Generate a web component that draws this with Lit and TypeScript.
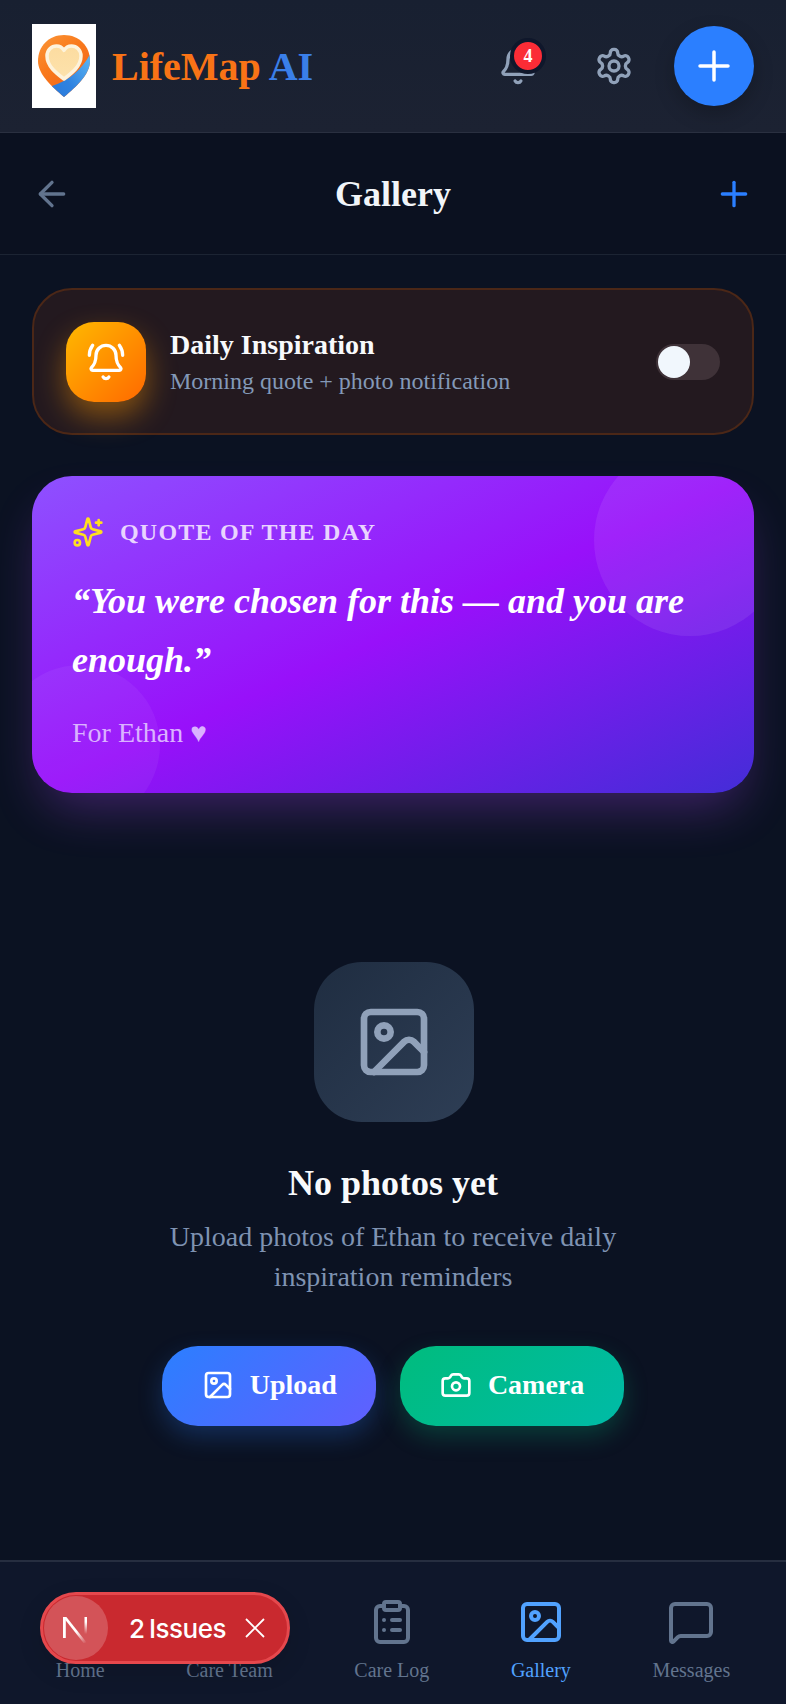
import { LitElement, html, css, svg } from "lit";
import { customElement } from "lit/decorators.js";

const icon = (size: number, body: unknown, cls = "", sw = 2) => html`<svg class=${cls} width=${size} height=${size} viewBox="0 0 24 24" fill="none" stroke="currentColor" stroke-width=${sw} stroke-linecap="round" stroke-linejoin="round">${body}</svg>`;

const bell = svg`<path d="M10.268 21a2 2 0 0 0 3.464 0"/><path d="M3.262 15.326A1 1 0 0 0 4 17h16a1 1 0 0 0 .74-1.673C19.41 13.956 18 12.499 18 8A6 6 0 0 0 6 8c0 4.499-1.411 5.956-2.738 7.326"/>`;
const bellRing = svg`<path d="M10.268 21a2 2 0 0 0 3.464 0"/><path d="M22 8c0-2.3-.8-4.3-2-6"/><path d="M3.262 15.326A1 1 0 0 0 4 17h16a1 1 0 0 0 .74-1.673C19.41 13.956 18 12.499 18 8A6 6 0 0 0 6 8c0 4.499-1.411 5.956-2.738 7.326"/><path d="M4 2C2.8 3.7 2 5.7 2 8"/>`;
const gear = svg`<path d="M12.22 2h-.44a2 2 0 0 0-2 2v.18a2 2 0 0 1-1 1.73l-.43.25a2 2 0 0 1-2 0l-.15-.08a2 2 0 0 0-2.73.73l-.22.38a2 2 0 0 0 .73 2.73l.15.1a2 2 0 0 1 1 1.72v.51a2 2 0 0 1-1 1.74l-.15.09a2 2 0 0 0-.73 2.73l.22.38a2 2 0 0 0 2.73.73l.15-.08a2 2 0 0 1 2 0l.43.25a2 2 0 0 1 1 1.73V20a2 2 0 0 0 2 2h.44a2 2 0 0 0 2-2v-.18a2 2 0 0 1 1-1.73l.43-.25a2 2 0 0 1 2 0l.15.08a2 2 0 0 0 2.73-.73l.22-.39a2 2 0 0 0-.73-2.73l-.15-.08a2 2 0 0 1-1-1.74v-.5a2 2 0 0 1 1-1.74l.15-.09a2 2 0 0 0 .73-2.73l-.22-.38a2 2 0 0 0-2.73-.73l-.15.08a2 2 0 0 1-2 0l-.43-.25a2 2 0 0 1-1-1.73V4a2 2 0 0 0-2-2z"/><circle cx="12" cy="12" r="3"/>`;
const plus = svg`<path d="M5 12h14"/><path d="M12 5v14"/>`;
const arrowLeft = svg`<path d="m12 19-7-7 7-7"/><path d="M19 12H5"/>`;
const sparkles = svg`<path d="M9.937 15.5A2 2 0 0 0 8.5 14.063l-6.135-1.582a.5.5 0 0 1 0-.962L8.5 9.936A2 2 0 0 0 9.937 8.5l1.582-6.135a.5.5 0 0 1 .963 0L14.063 8.5A2 2 0 0 0 15.5 9.937l6.135 1.581a.5.5 0 0 1 0 .964L15.5 14.063a2 2 0 0 0-1.437 1.437l-1.582 6.135a.5.5 0 0 1-.963 0z"/><path d="M20 3v4"/><path d="M22 5h-4"/><circle cx="4" cy="20" r="2"/>`;
const image = svg`<rect x="3" y="3" width="18" height="18" rx="2" ry="2"/><circle cx="9" cy="9" r="2"/><path d="m21 15-3.086-3.086a2 2 0 0 0-2.828 0L6 21"/>`;
const camera = svg`<path d="M13.997 4a2 2 0 0 1 1.76 1.05l.486.9A2 2 0 0 0 18.003 7H20a2 2 0 0 1 2 2v9a2 2 0 0 1-2 2H4a2 2 0 0 1-2-2V9a2 2 0 0 1 2-2h1.997a2 2 0 0 0 1.759-1.048l.489-.904A2 2 0 0 1 10.004 4z"/><circle cx="12" cy="13" r="3"/>`;
const home = svg`<path d="M15 21v-8a1 1 0 0 0-1-1h-4a1 1 0 0 0-1 1v8"/><path d="M3 10a2 2 0 0 1 .709-1.528l7-5.999a2 2 0 0 1 2.582 0l7 5.999A2 2 0 0 1 21 10v9a2 2 0 0 1-2 2H5a2 2 0 0 1-2-2z"/>`;
const users = svg`<path d="M16 21v-2a4 4 0 0 0-4-4H6a4 4 0 0 0-4 4v2"/><circle cx="9" cy="7" r="4"/><path d="M22 21v-2a4 4 0 0 0-3-3.87"/><path d="M16 3.13a4 4 0 0 1 0 7.75"/>`;
const clipboard = svg`<rect x="8" y="2" width="8" height="4" rx="1" ry="1"/><path d="M16 4h2a2 2 0 0 1 2 2v14a2 2 0 0 1-2 2H6a2 2 0 0 1-2-2V6a2 2 0 0 1 2-2h2"/><path d="M12 11h4"/><path d="M12 16h4"/><path d="M8 11h.01"/><path d="M8 16h.01"/>`;
const message = svg`<path d="M22 17a2 2 0 0 1-2 2H6.828a2 2 0 0 0-1.414.586l-2.202 2.202A.71.71 0 0 1 2 21.286V5a2 2 0 0 1 2-2h16a2 2 0 0 1 2 2z"/>`;

const logo = html`<svg class="logo" width="64" height="84" viewBox="0 0 64 84">
  <defs>
    <linearGradient id="pinO" x1="0.2" y1="0" x2="0.7" y2="0.8"><stop offset="0" stop-color="#fb9a3c"/><stop offset="0.5" stop-color="#f97a1c"/><stop offset="1" stop-color="#f0641a"/></linearGradient>
    <linearGradient id="pinB" x1="1" y1="0" x2="0" y2="1"><stop offset="0" stop-color="#62bdf6"/><stop offset="0.6" stop-color="#2f82e0"/><stop offset="1" stop-color="#2a78d8"/></linearGradient>
    <linearGradient id="heartF" x1="0.5" y1="0" x2="0.5" y2="1"><stop offset="0" stop-color="#fcdca0"/><stop offset="1" stop-color="#fde2ac"/></linearGradient>
    <clipPath id="pinClip"><path d="M32 11C17 11 6 22 6 37c0 13 13 25 26 36 13-11 26-23 26-36C58 22 47 11 32 11z"/></clipPath>
  </defs>
  <g clip-path="url(#pinClip)">
    <rect width="64" height="84" fill="url(#pinO)"/>
    <path d="M60 26 L60 80 L24 80 L20 62 C38 56 52 44 60 26z" fill="url(#pinB)"/>
  </g>
  <path d="M32 55C24 49 15 42 15 32c0-6 4.500-10 9.500-10 3 0 5.800 1.500 7.500 4.300C33.700 23.500 36.500 22 39.500 22c5 0 9.500 4 9.500 10 0 10-9 17-17 23z" fill="url(#heartF)" stroke="#fdf3dc" stroke-width="3.500" stroke-linejoin="round"/>
</svg>`;

@customElement("app-root")
export class AppRoot extends LitElement {
  static styles = css`
    :host { display: block; width: 786px; height: 1704px; font-family: "Liberation Serif", "Times New Roman", serif; color: #f8fafc; }
    * { box-sizing: border-box; }
    .app { position: relative; height: 1704px; display: flex; flex-direction: column; overflow: hidden; background: #0b1222; }
    svg { display: block; flex: none; }

    .top { height: 133px; flex: none; display: flex; align-items: center; padding: 0 32px; background: linear-gradient(180deg, #182031, #1c2232); border-bottom: 1px solid #2a3040; }
    .logo { background: #fff; }
    .brand { margin-left: 16px; font-size: 40px; font-weight: 700; color: #f97316; }
    .brand span { color: #3a7fe8; }
    .top-actions { margin-left: auto; display: flex; align-items: center; }
    .bell-wrap { position: relative; width: 40px; height: 40px; color: #90a1b9; margin-right: 56px; }
    .badge { position: absolute; top: -8px; left: 12px; width: 36px; height: 36px; border-radius: 50%; border: 4px solid #0f172b; display: flex; align-items: center; justify-content: center; font-size: 18px; font-weight: 700; color: #fff; background: #fb2c36; }
    .gear { color: #90a1b9; margin-right: 40px; }
    .add { width: 80px; height: 80px; border-radius: 50%; background: #2b7fff; color: #fff; display: flex; align-items: center; justify-content: center; box-shadow: 0 8px 20px rgba(0,0,0,.22); }

    .bar { height: 122px; flex: none; display: flex; align-items: center; justify-content: space-between; padding: 0 32px; border-bottom: 1px solid #1c2433; background: #0b1120; }
    .bar h1 { margin: 0; font-size: 36px; font-weight: 700; color: #f1f5f9; }
    .back { color: #62748e; }
    .more { color: #2b7fff; }

    .main { flex: 1; padding: 33px 32px 0; display: flex; flex-direction: column; min-height: 0; background: #0b1222; }
    .daily { height: 147px; flex: none; border-radius: 40px; background: #23191f; border: 2px solid #4b2717; display: flex; align-items: center; padding: 0 32px; }
    .daily-icon { width: 80px; height: 80px; border-radius: 28px; background: linear-gradient(135deg, #ffb900, #ff6900); display: flex; align-items: center; justify-content: center; color: #fff; box-shadow: 0 14px 30px rgba(254,154,0,.45); flex: none; }
    .daily-text { margin-left: 24px; flex: 1; padding-top: 2px; }
    .daily-title { font-size: 28px; font-weight: 700; color: #f8fafc; line-height: 36px; }
    .daily-sub { font-size: 24px; color: #8399b8; line-height: 36px; }
    .toggle { width: 64px; height: 36px; border-radius: 18px; background: #3f3238; position: relative; flex: none; }
    .thumb { position: absolute; left: 2px; top: 2px; width: 32px; height: 32px; border-radius: 50%; background: #f1f7fd; }

    .quote { position: relative; overflow: hidden; margin-top: 41px; height: 317px; flex: none; border-radius: 40px; padding: 40px; background: linear-gradient(to bottom right, #8e51ff 0%, #9810fa 50%, #432dd7 100%); box-shadow: 0 25px 50px -12px rgba(173, 70, 255, .32); }
    .circle { position: absolute; border-radius: 50%; }
    .c1 { width: 192px; height: 192px; top: -32px; right: -32px; background: rgba(255,255,255,.08); }
    .c2 { width: 160px; height: 160px; bottom: -32px; left: -32px; background: rgba(255,255,255,.05); }
    .q-head { position: relative; display: flex; align-items: center; gap: 16px; color: #e9d4ff; font-size: 24px; font-weight: 700; letter-spacing: 1.2px; }
    .spark { color: #ffdf20; }
    .q-text { position: relative; margin-top: 24px; font-size: 36px; line-height: 58.5px; font-weight: 700; font-style: italic; color: #fff; }
    .q-by { position: relative; margin-top: 26px; font-size: 28px; line-height: 36px; color: #dab2ff; }

    .empty { display: flex; flex-direction: column; align-items: center; padding-top: 169px; }
    .empty-icon { width: 160px; height: 160px; margin-left: 2px; border-radius: 48px; background: linear-gradient(135deg, #1f2d41, #2e3e55); display: flex; align-items: center; justify-content: center; color: #90a1b9; }
    .empty h2 { margin: 39px 0 0; font-size: 36px; line-height: 44px; font-weight: 700; color: #f8fafc; }
    .empty p { margin: 12px 0 0; width: 480px; text-align: center; font-size: 28px; line-height: 40px; color: #7f93b2; }
    .btns { display: flex; gap: 24px; margin-top: 49px; }
    .btn { height: 80px; border-radius: 36px; padding: 0 39.5px 2px; display: flex; align-items: center; gap: 16px; font-size: 28px; font-weight: 700; color: #fff; }
    .upload { background: linear-gradient(135deg, #2b7fff, #615fff); box-shadow: 0 10px 24px rgba(43,127,255,.25); }
    .camera { background: linear-gradient(135deg, #00bc7d, #00bba7); box-shadow: 0 10px 24px rgba(0,188,125,.25); }

    .nav { height: 144px; flex: none; background: #0f172b; border-top: 2px solid #262e40; display: flex; justify-content: space-around; padding: 36px 15px 0; }
    .item { display: flex; flex-direction: column; align-items: center; color: #62748e; font-size: 20px; line-height: 28px; gap: 10px; }
    .item.active { color: #51a2ff; }

    .toast { position: absolute; left: 40px; top: 1592px; width: 250px; height: 72px; border-radius: 36px; background: #c9292f; border: 3px solid #e5484d; display: flex; align-items: center; padding-left: 1px; font-family: Inter, "Liberation Sans", sans-serif; color: #fff; box-shadow: 0 8px 24px rgba(0,0,0,.12); }
    .n { width: 64px; height: 64px; border-radius: 50%; background: rgba(255,255,255,.2); display: flex; align-items: center; justify-content: center; flex: none; }
    .count { margin-left: 21px; font-size: 26px; font-weight: 500; letter-spacing: -.5px; white-space: nowrap; word-spacing: -2px; }
    .x { margin-left: 17px; }
  `;

  render() {
    return html`<div class="app">
      <header class="top">
        ${logo}
        <div class="brand">LifeMap <span>AI</span></div>
        <div class="top-actions">
          <div class="bell-wrap">${icon(40, bell)}<div class="badge">4</div></div>
          <div class="gear">${icon(40, gear)}</div>
          <div class="add">${icon(48, plus, "", 1.75)}</div>
        </div>
      </header>
      <div class="bar">
        <div class="back">${icon(40, arrowLeft)}</div>
        <h1>Gallery</h1>
        <div class="more">${icon(40, plus)}</div>
      </div>
      <main class="main">
        <section class="daily">
          <div class="daily-icon">${icon(40, bellRing)}</div>
          <div class="daily-text">
            <div class="daily-title">Daily Inspiration</div>
            <div class="daily-sub">Morning quote + photo notification</div>
          </div>
          <div class="toggle"><div class="thumb"></div></div>
        </section>
        <section class="quote">
          <div class="circle c1"></div>
          <div class="circle c2"></div>
          <div class="q-head">${icon(32, sparkles, "spark")}<span>QUOTE OF THE DAY</span></div>
          <div class="q-text">“You were chosen for this — and you are enough.”</div>
          <div class="q-by">For Ethan ♥</div>
        </section>
        <section class="empty">
          <div class="empty-icon">${icon(80, image)}</div>
          <h2>No photos yet</h2>
          <p>Upload photos of Ethan to receive daily inspiration reminders</p>
          <div class="btns">
            <div class="btn upload">${icon(32, image)}Upload</div>
            <div class="btn camera">${icon(32, camera)}Camera</div>
          </div>
        </section>
      </main>
      <nav class="nav">
        <div class="item">${icon(48, home)}<span>Home</span></div>
        <div class="item">${icon(48, users)}<span>Care Team</span></div>
        <div class="item">${icon(48, clipboard)}<span>Care Log</span></div>
        <div class="item active">${icon(48, image)}<span>Gallery</span></div>
        <div class="item">${icon(48, message)}<span>Messages</span></div>
      </nav>
      <div class="toast">
        <div class="n"><svg width="32" height="32" viewBox="0 0 32 32">
          <defs>
            <linearGradient id="nDiag" gradientUnits="userSpaceOnUse" x1="16" y1="20" x2="26" y2="31"><stop offset="0" stop-color="#fff"/><stop offset="1" stop-color="#fff" stop-opacity="0"/></linearGradient>
            <linearGradient id="nStem" gradientUnits="userSpaceOnUse" x1="0" y1="10" x2="0" y2="22"><stop offset="0" stop-color="#fff"/><stop offset="1" stop-color="#fff" stop-opacity="0"/></linearGradient>
          </defs>
          <path d="M3 5h2.800v21H3z" fill="#fff"/>
          <path d="M3 5h3.400L27 31h-3.400z" fill="url(#nDiag)"/>
          <path d="M24.500 5H27v17h-2.500z" fill="url(#nStem)"/>
        </svg></div>
        <div class="count">2 Issues</div>
        <svg class="x" width="24" height="24" viewBox="0 0 24 24" fill="none" stroke="#fff" stroke-width="1.800"><path d="M3 3l18 18M21 3L3 21"/></svg>
      </div>
    </div>`;
  }
}
